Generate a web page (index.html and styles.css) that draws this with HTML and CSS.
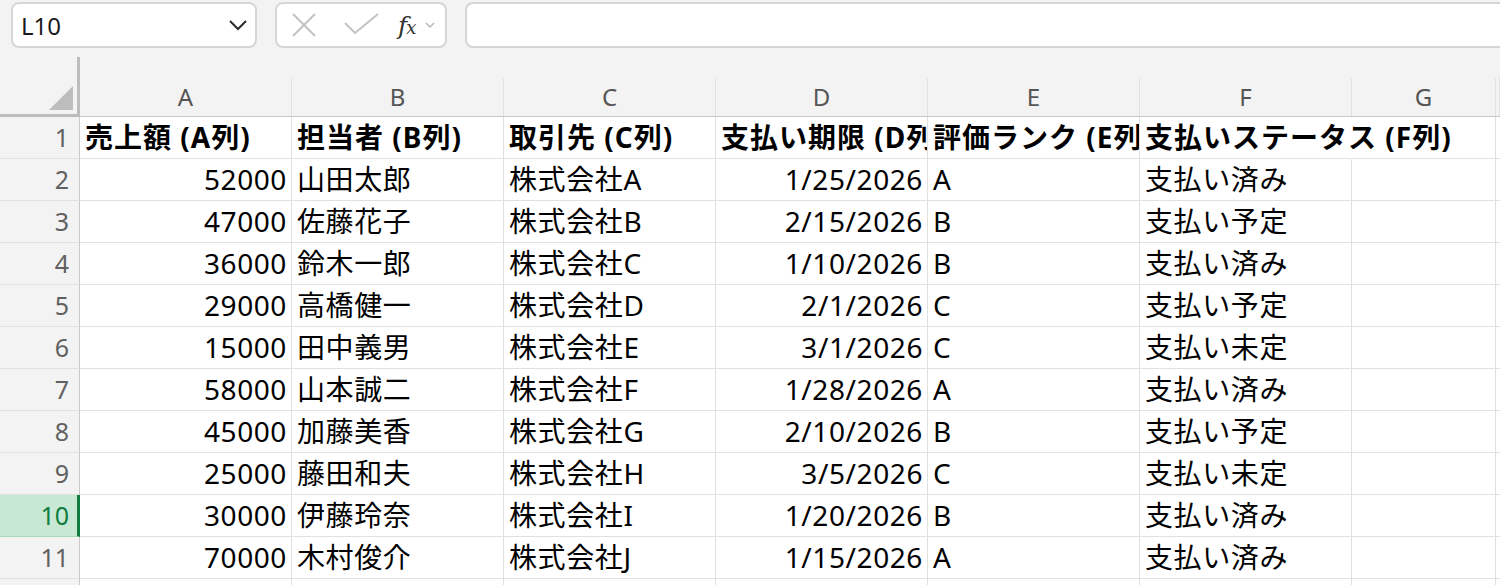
FILE: index.html
```html
<!DOCTYPE html>
<html>
<head>
  <meta charset="utf-8">
  <title>Book1 - Sheet1</title>
  <link rel="stylesheet" href="styles.css">
</head>
<body>
  <div class="formula-bar">
    <div class="name-box">
      <span class="name-value">L10</span>
      <svg class="name-caret" width="20" height="12" viewBox="0 0 20 12"><path d="M2 2 L10 10 L18 2" fill="none" stroke="#2b2b2b" stroke-width="2"/></svg>
    </div>
    <div class="fx-box">
      <svg class="fx-cancel" width="28" height="24" viewBox="0 0 28 24"><path d="M3 1 L25 23 M25 1 L3 23" fill="none" stroke="#c2c2c2" stroke-width="2"/></svg>
      <svg class="fx-enter" width="36" height="22" viewBox="0 0 36 22"><path d="M1 10 L11 20 L34 1" fill="none" stroke="#c2c2c2" stroke-width="2"/></svg>
      <span class="fx-label"><i>f</i><i class="fx-sub">x</i></span>
      <svg class="fx-caret" width="10" height="6" viewBox="0 0 10 6"><path d="M1 1 L5 5 L9 1" fill="none" stroke="#b5b5b5" stroke-width="1.3"/></svg>
    </div>
    <div class="formula-input"></div>
  </div>

  <div class="sheet">
    <div class="row col-heads">
      <div class="corner"><span class="select-all"></span></div>
      <div class="col-head"><span>A</span></div>
      <div class="col-head"><span>B</span></div>
      <div class="col-head"><span>C</span></div>
      <div class="col-head"><span>D</span></div>
      <div class="col-head"><span>E</span></div>
      <div class="col-head"><span>F</span></div>
      <div class="col-head"><span>G</span></div>
      <div class="col-head"><span></span></div>
    </div>

    <div class="row header-row">
      <div class="row-head">1</div>
      <div class="cell">売上額 (A列)</div>
      <div class="cell">担当者 (B列)</div>
      <div class="cell">取引先 (C列)</div>
      <div class="cell">支払い期限 (D列)</div>
      <div class="cell">評価ランク (E列)</div>
      <div class="cell spill">支払いステータス (F列)</div>
      <div class="cell"></div>
      <div class="cell"></div>
    </div>

    <div class="row">
      <div class="row-head">2</div>
      <div class="cell num">52000</div>
      <div class="cell">山田太郎</div>
      <div class="cell">株式会社A</div>
      <div class="cell num">1/25/2026</div>
      <div class="cell">A</div>
      <div class="cell">支払い済み</div>
      <div class="cell"></div>
      <div class="cell"></div>
    </div>

    <div class="row">
      <div class="row-head">3</div>
      <div class="cell num">47000</div>
      <div class="cell">佐藤花子</div>
      <div class="cell">株式会社B</div>
      <div class="cell num">2/15/2026</div>
      <div class="cell">B</div>
      <div class="cell">支払い予定</div>
      <div class="cell"></div>
      <div class="cell"></div>
    </div>

    <div class="row">
      <div class="row-head">4</div>
      <div class="cell num">36000</div>
      <div class="cell">鈴木一郎</div>
      <div class="cell">株式会社C</div>
      <div class="cell num">1/10/2026</div>
      <div class="cell">B</div>
      <div class="cell">支払い済み</div>
      <div class="cell"></div>
      <div class="cell"></div>
    </div>

    <div class="row">
      <div class="row-head">5</div>
      <div class="cell num">29000</div>
      <div class="cell">高橋健一</div>
      <div class="cell">株式会社D</div>
      <div class="cell num">2/1/2026</div>
      <div class="cell">C</div>
      <div class="cell">支払い予定</div>
      <div class="cell"></div>
      <div class="cell"></div>
    </div>

    <div class="row">
      <div class="row-head">6</div>
      <div class="cell num">15000</div>
      <div class="cell">田中義男</div>
      <div class="cell">株式会社E</div>
      <div class="cell num">3/1/2026</div>
      <div class="cell">C</div>
      <div class="cell">支払い未定</div>
      <div class="cell"></div>
      <div class="cell"></div>
    </div>

    <div class="row">
      <div class="row-head">7</div>
      <div class="cell num">58000</div>
      <div class="cell">山本誠二</div>
      <div class="cell">株式会社F</div>
      <div class="cell num">1/28/2026</div>
      <div class="cell">A</div>
      <div class="cell">支払い済み</div>
      <div class="cell"></div>
      <div class="cell"></div>
    </div>

    <div class="row">
      <div class="row-head">8</div>
      <div class="cell num">45000</div>
      <div class="cell">加藤美香</div>
      <div class="cell">株式会社G</div>
      <div class="cell num">2/10/2026</div>
      <div class="cell">B</div>
      <div class="cell">支払い予定</div>
      <div class="cell"></div>
      <div class="cell"></div>
    </div>

    <div class="row">
      <div class="row-head">9</div>
      <div class="cell num">25000</div>
      <div class="cell">藤田和夫</div>
      <div class="cell">株式会社H</div>
      <div class="cell num">3/5/2026</div>
      <div class="cell">C</div>
      <div class="cell">支払い未定</div>
      <div class="cell"></div>
      <div class="cell"></div>
    </div>

    <div class="row">
      <div class="row-head active">10</div>
      <div class="cell num">30000</div>
      <div class="cell">伊藤玲奈</div>
      <div class="cell">株式会社I</div>
      <div class="cell num">1/20/2026</div>
      <div class="cell">B</div>
      <div class="cell">支払い済み</div>
      <div class="cell"></div>
      <div class="cell"></div>
    </div>

    <div class="row">
      <div class="row-head">11</div>
      <div class="cell num">70000</div>
      <div class="cell">木村俊介</div>
      <div class="cell">株式会社J</div>
      <div class="cell num">1/15/2026</div>
      <div class="cell">A</div>
      <div class="cell">支払い済み</div>
      <div class="cell"></div>
      <div class="cell"></div>
    </div>

    <!-- next row, only its top edge fits in the window -->
    <div class="row">
      <div class="row-head"></div>
      <div class="cell"></div>
      <div class="cell"></div>
      <div class="cell"></div>
      <div class="cell"></div>
      <div class="cell"></div>
      <div class="cell"></div>
      <div class="cell"></div>
      <div class="cell"></div>
    </div>
  </div>
</body>
</html>
```

FILE: styles.css
```css
* {
  box-sizing: border-box;
}

body {
  margin: 0;
  width: 1500px;
  height: 585px;
  overflow: hidden;
  background: #ffffff;
  font-family: 'Noto Sans', 'Noto Sans CJK JP', sans-serif;
  color: #000;
}

/* formula bar */

.formula-bar {
  display: flex;
  align-items: flex-start;
  gap: 18px;
  height: 57px;
  padding: 2px 0 0 11px;
  background: #f3f3f3;
}

.name-box,
.fx-box,
.formula-input {
  height: 46px;
  background: #fff;
  border: 2px solid #d6d6d6;
  border-radius: 8px;
}

.name-box {
  width: 246px;
  display: flex;
  align-items: center;
  justify-content: space-between;
  padding: 0 7px 0 8px;
}

.name-value {
  font-size: 24px;
  color: #1a1a1a;
}

.fx-box {
  width: 172px;
  display: flex;
  align-items: center;
  padding: 0 0 0 13px;
}

.fx-cancel {
  margin-right: 26px;
}

.fx-enter {
  margin-top: -2px;
  margin-right: 18px;
}

.fx-label {
  font-family: 'DejaVu Serif', serif;
  font-size: 25px;
  color: #333;
  margin-right: 9px;
}

.fx-sub {
  font-size: 18px;
  margin-left: -1px;
}

.formula-input {
  flex: 1;
  margin-right: -20px;
}

/* grid */

.row {
  display: grid;
  grid-template-columns: 80px repeat(6, 212px) 144px 1fr;
  height: 42px;
}

.col-heads {
  height: 60px;
  background: #f3f3f3;
  border-bottom: 1px solid #c9c9c9;
}

.corner {
  position: relative;
  border-right: 3px solid #bdbdbd;
  border-bottom: 3px solid #bdbdbd;
  margin-bottom: -1px;
}

.select-all {
  position: absolute;
  right: 4px;
  bottom: 4px;
  width: 0;
  height: 0;
  border-style: solid;
  border-width: 0 0 24px 24px;
  border-color: transparent transparent #bdbdbd transparent;
}

.col-head {
  display: flex;
  align-items: flex-end;
}

.col-head span {
  width: 100%;
  height: 38px;
  border-right: 1px solid #e1e1e1;
  text-align: center;
  font-size: 24px;
  line-height: 38px;
  color: #555;
}

.row-head {
  background: #f3f3f3;
  border-right: 1px solid #c9c9c9;
  border-bottom: 1px solid #e1e1e1;
  padding-right: 10px;
  text-align: right;
  font-size: 25px;
  line-height: 41px;
  color: #616161;
}

.row-head.active {
  background: #c7e9d4;
  color: #107c41;
  border-right: 3px solid #107c41;
  border-bottom-color: #a9d9bd;
  padding-right: 8px;
}

.cell {
  border-right: 1px solid #e1e1e1;
  border-bottom: 1px solid #e1e1e1;
  padding: 0 5px 0 5px;
  font-size: 28px;
  line-height: 41px;
  letter-spacing: 0.6px;
  white-space: nowrap;
  overflow: hidden;
}

.cell.num {
  text-align: right;
  padding-right: 4px;
}

.header-row .cell {
  font-weight: bold;
  letter-spacing: 1px;
}

/* F1 spills over into the empty G1 */
.cell.spill {
  overflow: visible;
  border-right-color: transparent;
  position: relative;
  z-index: 1;
}
```
